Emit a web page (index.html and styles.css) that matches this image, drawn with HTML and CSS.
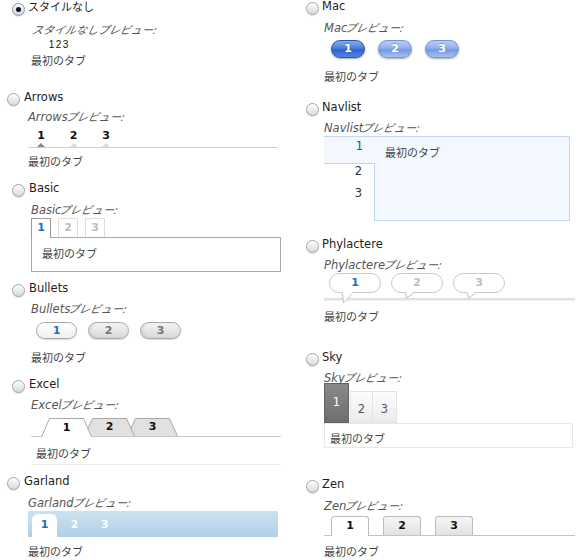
FILE: index.html
```html
<!DOCTYPE html>
<html lang="ja">
<head>
<meta charset="utf-8">
<title>タブのスタイル</title>
<link rel="stylesheet" href="styles.css">
</head>
<body>
<div class="page">
  <div class="col col-left">
    <section class="opt s-none">
      <label class="head"><span class="radio checked"></span><span class="ja">スタイルなし</span></label>
      <div class="body">
        <div class="pv"><span class="ja first">スタイルなしプレビュー:</span></div>
        <div class="plain-tabs"><span>1</span><span>2</span><span>3</span></div>
        <div class="content ja">最初のタブ</div>
      </div>
    </section>

    <section class="opt shift s-arrows">
      <label class="head"><span class="radio"></span>Arrows</label>
      <div class="body">
        <div class="pv">Arrows<span class="ja">プレビュー:</span></div>
        <div class="arrows"><span class="on">1</span><span>2</span><span>3</span></div>
        <div class="content ja">最初のタブ</div>
      </div>
    </section>

    <section class="opt s-basic">
      <label class="head"><span class="radio"></span>Basic</label>
      <div class="body">
        <div class="pv">Basic<span class="ja">プレビュー:</span></div>
        <div class="basic-tabs"><span class="on">1</span><span>2</span><span>3</span></div>
        <div class="basic-box ja">最初のタブ</div>
      </div>
    </section>

    <section class="opt s-bullets">
      <label class="head"><span class="radio"></span>Bullets</label>
      <div class="body">
        <div class="pv">Bullets<span class="ja">プレビュー:</span></div>
        <div class="bullets"><span class="on">1</span><span>2</span><span>3</span></div>
        <div class="content ja">最初のタブ</div>
      </div>
    </section>

    <section class="opt s-excel">
      <label class="head"><span class="radio"></span>Excel</label>
      <div class="body">
        <div class="pv">Excel<span class="ja">プレビュー:</span></div>
        <div class="excel">
          <div class="xtab on">
            <svg viewBox="0 0 51 19" width="51" height="19"><polygon points="0,19 8,0 43,0 51,19" fill="#fff"/><polyline points="0.5,19 8.5,0.5 42.5,0.5 50.5,19" fill="none" stroke="#a8a8a8"/></svg>
            <span class="xnum">1</span>
          </div>
          <div class="xtab t2">
            <svg viewBox="0 0 51 18" width="51" height="18"><polygon points="0.5,18 8.5,0.5 42.5,0.5 50.5,18" fill="#e1e1e1"/><polyline points="0.5,18 8.5,0.5 42.5,0.5 50.5,18" fill="none" stroke="#a8a8a8"/></svg>
            <span class="xnum">2</span>
          </div>
          <div class="xtab t3">
            <svg viewBox="0 0 51 18" width="51" height="18"><polygon points="0.5,18 8.5,0.5 42.5,0.5 50.5,18" fill="#e1e1e1"/><polyline points="0.5,18 8.5,0.5 42.5,0.5 50.5,18" fill="none" stroke="#a8a8a8"/></svg>
            <span class="xnum">3</span>
          </div>
        </div>
        <div class="excel-content ja">最初のタブ</div>
      </div>
    </section>

    <section class="opt shift s-garland">
      <label class="head"><span class="radio"></span>Garland</label>
      <div class="body">
        <div class="pv">Garland<span class="ja">プレビュー:</span></div>
        <div class="garland"><span class="on">1</span><span>2</span><span>3</span></div>
        <div class="content ja">最初のタブ</div>
      </div>
    </section>
  </div>

  <div class="col col-right">
    <section class="opt s-mac">
      <label class="head"><span class="radio"></span>Mac</label>
      <div class="body">
        <div class="pv">Mac<span class="ja">プレビュー:</span></div>
        <div class="mac"><span class="on">1</span><span>2</span><span>3</span></div>
        <div class="content ja">最初のタブ</div>
      </div>
    </section>

    <section class="opt s-navlist">
      <label class="head"><span class="radio"></span>Navlist</label>
      <div class="body">
        <div class="pv">Navlist<span class="ja">プレビュー:</span></div>
        <div class="navlist">
          <div class="nav-items"><span class="on">1</span><span>2</span><span>3</span></div>
          <div class="nav-box ja">最初のタブ</div>
        </div>
      </div>
    </section>

    <section class="opt s-phyl">
      <label class="head"><span class="radio"></span>Phylactere</label>
      <div class="body">
        <div class="pv">Phylactere<span class="ja">プレビュー:</span></div>
        <div class="phyl">
          <div class="bubbles">
            <span class="bubble on">1<svg class="tail big" viewBox="0 0 12 12" width="12" height="12"><polygon points="0.5,0 1.5,11 10.5,0" fill="#fff"/><polyline points="0.5,1 1.5,11 10.5,1.5" fill="none" stroke="#c4c4c4"/></svg></span>
            <span class="bubble">2<svg class="tail" viewBox="0 0 9 7" width="9" height="7"><polygon points="0.5,0 1.5,6 8,0" fill="#fff"/><polyline points="0.5,1 1.5,6 8,1.5" fill="none" stroke="#c4c4c4"/></svg></span>
            <span class="bubble">3<svg class="tail" viewBox="0 0 9 7" width="9" height="7"><polygon points="0.5,0 1.5,6 8,0" fill="#fff"/><polyline points="0.5,1 1.5,6 8,1.5" fill="none" stroke="#c4c4c4"/></svg></span>
          </div>
          <div class="phyl-line"></div>
        </div>
        <div class="content ja">最初のタブ</div>
      </div>
    </section>

    <section class="opt s-sky">
      <label class="head"><span class="radio"></span>Sky</label>
      <div class="body">
        <div class="pv">Sky<span class="ja">プレビュー:</span></div>
        <div class="sky"><span class="on">1</span><span class="t2">2</span><span class="t3">3</span></div>
        <div class="sky-box ja">最初のタブ</div>
      </div>
    </section>

    <section class="opt s-zen">
      <label class="head"><span class="radio"></span>Zen</label>
      <div class="body">
        <div class="pv">Zen<span class="ja">プレビュー:</span></div>
        <div class="zen"><span class="on">1</span><span>2</span><span>3</span></div>
        <div class="content ja">最初のタブ</div>
      </div>
    </section>
  </div>
</div>
</body>
</html>
```

FILE: styles.css
```css
* { box-sizing: border-box; }
html, body { margin: 0; padding: 0; background: #fff; }
body {
  font-family: "DejaVu Sans", "Noto Sans CJK JP", sans-serif;
  font-size: 11.5px;
  color: #222;
}
.ja { font-size: 11px; }

.page {
  display: grid;
  grid-template-columns: 300px 280px;
  height: 560px;
  overflow: hidden;
}
.col { display: flex; flex-direction: column; }

/* option header */
.head {
  display: flex;
  align-items: center;
  height: 15px;
  line-height: 15px;
  padding-left: 12px;
  color: #1e1e1e;
}
.radio {
  flex: none;
  width: 13px;
  height: 13px;
  margin: 3px 4px 0 0;
  border-radius: 50%;
  border: 1px solid #a4a4a4;
  background: linear-gradient(#fefefe, #d9d9d9);
  box-shadow: 0 1px 1px rgba(0,0,0,.12), inset 0 1px 0 #fff;
}
.radio.checked {
  display: flex;
  align-items: center;
  justify-content: center;
  margin-right: 3px;
  border-color: #8592a8;
  background: linear-gradient(#f6f8fb, #cfd7e3);
}
.radio.checked::after {
  content: "";
  width: 5px;
  height: 5px;
  border-radius: 50%;
  background: #141414;
}
.body { margin-left: 31px; width: 250px; }
.shift .head { padding-left: 7px; }
.shift .body { margin-left: 28px; }
.col-right .head { padding-left: 6px; }
.col-right .radio { margin-right: 3px; }
.col-right .body { margin-left: 24px; width: 251px; }

.pv { line-height: 15px; font-style: italic; color: #555; }
.pv .ja {
  display: inline-block;
  margin-left: -3px;
  transform: skewX(-13deg);
  transform-origin: 0 80%;
}
.pv .ja.first { margin-left: 0; }
.content { line-height: 15px; color: #444; }

/* vertical rhythm per option */
.s-none .pv { margin-top: 8px; }
.s-none .content { margin-top: 2px; }

.s-arrows { margin-top: 21px; }
.s-arrows .pv { margin-top: 5px; }
.s-arrows .content { margin-top: 7px; }

.s-basic { margin-top: 11px; }
.s-basic .pv { margin-top: 7px; }

.s-bullets { margin-top: 9px; }
.s-bullets .pv { margin-top: 6px; }
.s-bullets .content { margin-top: 12px; }

.s-excel { margin-top: 11px; }
.s-excel .pv { margin-top: 6px; }

.s-garland { margin-top: 9px; }
.s-garland .pv { margin-top: 7px; }
.s-garland .content { margin-top: 8px; }

.s-mac { margin-top: -1px; }
.s-mac .pv { margin-top: 7px; }
.s-mac .content { margin-top: 12px; }

.s-navlist { margin-top: 15px; }
.s-navlist .pv { margin-top: 6px; }

.s-phyl { margin-top: 16px; }
.s-phyl .pv { margin-top: 6px; }
.s-phyl .content { margin-top: 9px; }

.s-sky { margin-top: 25px; }
.s-sky .pv { margin-top: 6px; }

.s-zen { margin-top: 29px; }
.s-zen .pv { margin-top: 7px; }
.s-zen .content { margin-top: 9px; }

/* no style */
.plain-tabs {
  display: flex;
  padding-left: 17px;
  line-height: 14px;
  font-family: "Liberation Sans", sans-serif;
  font-size: 10px;
  color: #111;
}
.plain-tabs span { width: 7px; text-align: center; }

/* arrows */
.arrows {
  display: flex;
  gap: 16.5px;
  height: 20px;
  margin-top: 3px;
  padding-left: 5px;
  border-bottom: 1px solid #cfcfcf;
}
.arrows span {
  position: relative;
  width: 16px;
  height: 19px;
  line-height: 15px;
  text-align: center;
  font-weight: bold;
  font-size: 11px;
  color: #111;
}
.arrows span::after {
  content: "";
  position: absolute;
  left: 4px;
  bottom: 0;
  border: 4px solid transparent;
  border-top: 0;
  border-bottom-color: #dcdcdc;
}
.arrows span.on::after { border-bottom-color: #8a8a8a; }

/* basic */
.basic-tabs {
  display: flex;
  align-items: flex-end;
  gap: 7px;
  height: 19px;
}
.basic-tabs span {
  width: 20px;
  height: 19px;
  border: 1px solid #dedede;
  border-bottom: 0;
  background: #fff;
  text-align: center;
  line-height: 18px;
  font-weight: bold;
  font-size: 11px;
  color: #bcbcbc;
}
.basic-tabs span.on {
  position: relative;
  z-index: 1;
  height: 20px;
  margin-bottom: -1px;
  border-color: #9a9a9a;
  color: #1a73c8;
}
.basic-box {
  height: 35px;
  border: 1px solid #a9a9a9;
  padding: 9px 0 0 10px;
  line-height: 15px;
  color: #444;
}

/* bullets */
.bullets {
  display: flex;
  gap: 11px;
  margin-top: 5px;
  padding-left: 5px;
}
.bullets span {
  width: 41px;
  height: 17px;
  border: 1px solid #a9a9a9;
  border-radius: 9px;
  background: linear-gradient(#f4f4f4, #d8d8d8);
  box-shadow: 0 1px 1px rgba(0,0,0,.15), inset 2px 0 2px rgba(0,0,0,.08);
  text-align: center;
  line-height: 15px;
  font-weight: bold;
  font-size: 11px;
  color: #757575;
}
.bullets span.on {
  background: linear-gradient(#fff, #f0f0f0);
  box-shadow: 0 1px 1px rgba(0,0,0,.15);
  color: #1a73c8;
}

/* excel */
.excel {
  display: flex;
  align-items: flex-start;
  height: 19px;
  margin-top: 5px;
  padding-left: 10px;
  border-bottom: 1px solid #cacaca;
}
.xtab {
  position: relative;
  flex: none;
  width: 51px;
  height: 18px;
  text-align: center;
  line-height: 18px;
  font-weight: bold;
  font-size: 11px;
  color: #111;
}
.xtab + .xtab { margin-left: -8px; }
.xtab svg { position: absolute; left: 0; top: 0; }
.xtab .xnum { position: relative; }
.xtab.on { height: 19px; line-height: 19px; z-index: 3; }
.xtab.t2 { z-index: 2; }
.xtab.t3 { z-index: 1; }
.excel-content {
  padding: 10px 0 2px 5px;
  border-bottom: 1px solid #ececec;
  line-height: 15px;
  color: #444;
}

/* garland */
.garland {
  display: flex;
  gap: 5px;
  height: 26px;
  padding: 3px 0 0 4px;
  background: linear-gradient(#cde2f0, #bcd7eb 60%, #b1cfe6);
}
.garland span {
  width: 25px;
  height: 23px;
  text-align: center;
  line-height: 22px;
  font-weight: bold;
  font-size: 11px;
  color: #fff;
}
.garland span.on {
  background: #fff;
  border-radius: 6px 6px 0 0;
  color: #1a6fc6;
}

/* mac */
.mac {
  display: flex;
  gap: 13px;
  margin-top: 4px;
  padding-left: 7px;
}
.mac span {
  width: 34px;
  height: 18px;
  border-radius: 9px;
  border: 1px solid #7595d6;
  background: linear-gradient(#b7ccf3 0%, #8fb0ec 45%, #7299e3 55%, #a3c0f2 100%);
  box-shadow: 0 1px 2px rgba(0,0,0,.35);
  text-align: center;
  line-height: 16px;
  font-weight: bold;
  font-size: 11px;
  color: #fff;
  text-shadow: 0 -1px 0 rgba(0,0,0,.2);
}
.mac span.on {
  border-color: #2c55af;
  background: linear-gradient(#86a9ec 0%, #4f7edb 45%, #2f60cd 55%, #5386e1 100%);
}

/* navlist */
.navlist {
  display: flex;
  width: 246px;
  height: 85px;
}
.nav-items {
  flex: none;
  width: 50px;
  display: flex;
  flex-direction: column;
  text-align: right;
  line-height: 15px;
  color: #333;
}
.nav-items span { height: 22px; padding-right: 12px; }
.nav-items span.on {
  position: relative;
  z-index: 1;
  height: 28px;
  margin-right: -1px;
  padding-top: 2px;
  border-top: 1px solid #c2d6f3;
  border-bottom: 1px solid #c2d6f3;
  background: #f3f8fe;
  color: #1f5f4c;
}
.nav-box {
  flex: 1;
  border: 1px solid #c2d6f3;
  background: #f3f8fe;
  padding: 9px 0 0 10px;
  line-height: 15px;
  color: #444;
}

/* phylactere */
.phyl { height: 28px; }
.bubbles {
  display: flex;
  gap: 10px;
  padding-left: 5px;
}
.bubble {
  position: relative;
  width: 52px;
  height: 20px;
  border: 1px solid #c9c9c9;
  border-radius: 10px;
  background: #fff;
  text-align: center;
  line-height: 18px;
  font-weight: bold;
  font-size: 11px;
  color: #bdbdbd;
}
.bubble.on { color: #1a73c8; }
.bubble .tail { position: absolute; left: 13px; top: 18px; }
.bubble .tail.big { left: 12px; }
.phyl-line {
  height: 3px;
  margin-top: 5px;
  background: linear-gradient(#d8d8d8, #f2f2f2);
}

/* sky */
.sky {
  display: flex;
  align-items: flex-end;
  height: 40px;
  margin-top: -3px;
}
.sky span {
  position: relative;
  text-align: center;
  line-height: 15px;
}
.sky span.on {
  width: 25px;
  height: 40px;
  padding-top: 11px;
  border: 1px solid #626262;
  background: repeating-linear-gradient(0deg, rgba(255,255,255,.04) 0 1px, rgba(0,0,0,0) 1px 2px), linear-gradient(#878787, #6b6b6b);
  color: #fff;
}
.sky span.t2, .sky span.t3 {
  height: 32px;
  padding-top: 10px;
  border: 1px solid #e4e4e4;
  background: linear-gradient(#fdfdfd, #ebebeb);
  color: #555;
}
.sky span.t2 { width: 23px; margin-left: 1px; }
.sky span.t3 { width: 25px; margin-left: -1px; }
.sky-box {
  width: 249px;
  height: 25px;
  border: 1px solid #e9e9e9;
  padding: 9px 0 0 5px;
  line-height: 14px;
  color: #444;
}

/* zen */
.zen {
  display: flex;
  align-items: flex-end;
  gap: 14px;
  height: 20px;
  margin-top: 2px;
  padding-left: 7px;
  border-bottom: 1px solid #c6c6c6;
}
.zen span {
  width: 38px;
  height: 19px;
  border: 1px solid #bcbcbc;
  border-bottom: 0;
  border-radius: 3px 3px 0 0;
  background: linear-gradient(#f5f5f5, #e2e2e2);
  text-align: center;
  line-height: 18px;
  font-weight: bold;
  font-size: 11px;
  color: #111;
}
.zen span.on {
  position: relative;
  height: 20px;
  margin-bottom: -1px;
  background: #fff;
}
```
